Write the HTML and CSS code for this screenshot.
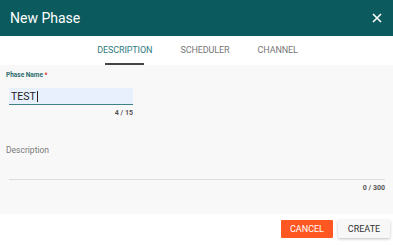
FILE: index.html
```html
<!DOCTYPE html>
<html lang="en">
<head>
    <meta charset="UTF-8" />
    <title>New Phase</title>
    <link rel="stylesheet" href="styles.css">
</head>
<body>
    <div class="dialog">
        <div class="header">
            <span class="title">New Phase</span>
            <svg class="close" width="10" height="10" viewBox="0 0 10 10">
                <path d="M1 1 L9 9 M9 1 L1 9" stroke="#ffffff" stroke-width="1.6" />
            </svg>
        </div>

        <div class="tabs">
            <div class="tab active">DESCRIPTION</div>
            <div class="tab">SCHEDULER</div>
            <div class="tab">CHANNEL</div>
        </div>

        <div class="content">
            <div class="field-label">Phase Name <span class="req">*</span></div>
            <div class="name-input">TEST<span class="caret"></span></div>
            <div class="counter short">4 / 15</div>

            <div class="desc-label">Description</div>
            <div class="desc-line"></div>
            <div class="counter">0 / 300</div>
        </div>

        <div class="footer">
            <button class="btn cancel">CANCEL</button>
            <button class="btn create">CREATE</button>
        </div>
    </div>
</body>
</html>
```

FILE: styles.css
```css
* {
    margin: 0;
    padding: 0;
    box-sizing: border-box;
    font-family: Roboto, "Liberation Sans", sans-serif;
}

body {
    width: 393px;
    height: 245px;
    overflow: hidden;
    background-color: #ffffff;
}

.dialog {
    display: flex;
    flex-direction: column;
    height: 245px;
}

.header {
    display: flex;
    justify-content: space-between;
    align-items: center;
    height: 36px;
    padding: 0 11px 0 10px;
    background-color: #0b5a5d;
}

.title {
    color: #ffffff;
    font-size: 14px;
}

.close {
    display: block;
}

.tabs {
    display: flex;
    justify-content: center;
    height: 29px;
    background-color: #ffffff;
    padding-left: 2px;
}

.tab {
    position: relative;
    padding: 9px 14px 0;
    font-size: 9px;
    color: #777777;
    letter-spacing: -0.1px;
}

.tab.active {
    color: #2f7c80;
}

.tab.active::after {
    content: "";
    position: absolute;
    left: 22px;
    right: 22px;
    bottom: 0;
    height: 2px;
    background-color: #444444;
}

.content {
    flex: 1;
    background-color: #f8f8f8;
    padding: 6px 8px 0 6px;
}

.field-label {
    font-size: 6.5px;
    font-weight: bold;
    color: #2c6b6e;
}

.req {
    color: #e53935;
}

.name-input {
    display: flex;
    align-items: center;
    width: 124px;
    height: 17px;
    margin: 9px 0 0 3px;
    padding: 0 2px;
    background-color: #e8f0fe;
    border-bottom: 1px solid #3f8184;
    font-size: 10.5px;
    color: #222222;
}

.caret {
    display: inline-block;
    width: 1px;
    height: 11px;
    margin-left: 1px;
    background-color: #222222;
}

.counter {
    font-size: 7px;
    font-weight: bold;
    color: #555555;
    text-align: right;
    margin-top: 4px;
}

.counter.short {
    width: 127px;
}

.desc-label {
    margin-top: 28px;
    font-size: 8.5px;
    color: #7a7a7a;
}

.desc-line {
    height: 1px;
    margin: 24px 0 0 3px;
    background-color: #dcdcdc;
}

.footer {
    display: flex;
    justify-content: flex-end;
    gap: 5px;
    height: 31px;
    padding: 6px 3px 0 0;
    background-color: #ffffff;
}

.btn {
    width: 52px;
    height: 18px;
    border: none;
    border-radius: 1px;
    font-size: 9px;
}

.cancel {
    background-color: #ff5722;
    color: #ffffff;
}

.create {
    background-color: #f7f7f7;
    color: #333333;
    box-shadow: 0 1px 3px rgba(0, 0, 0, 0.25);
}
```
